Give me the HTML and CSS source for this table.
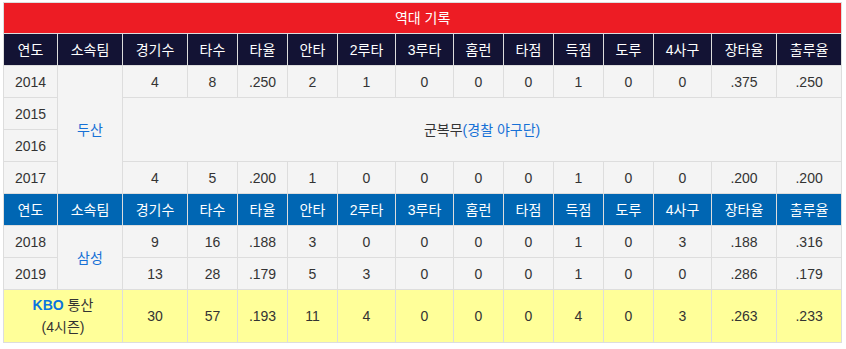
FILE: index.html
```html
<!DOCTYPE html>
<html lang="ko">
<head>
<meta charset="utf-8">
<link rel="stylesheet" href="styles.css">
</head>
<body>
<div class="wrap">
<table class="rec">
<colgroup>
<col class="w54"><col class="w65"><col class="w65"><col class="w50"><col class="w50"><col class="w50"><col class="w58"><col class="w58"><col class="w50"><col class="w50"><col class="w50"><col class="w50"><col class="w58"><col class="w65"><col class="w65">
</colgroup>
<tr class="title"><th colspan="15">역대 기록</th></tr>
<tr class="head dark"><th>연도</th><th>소속팀</th><th>경기수</th><th>타수</th><th>타율</th><th>안타</th><th>2루타</th><th>3루타</th><th>홈런</th><th>타점</th><th>득점</th><th>도루</th><th>4사구</th><th>장타율</th><th>출루율</th></tr>
<tr><td>2014</td><td rowspan="4" class="team">두산</td><td>4</td><td>8</td><td>.250</td><td>2</td><td>1</td><td>0</td><td>0</td><td>0</td><td>1</td><td>0</td><td>0</td><td>.375</td><td>.250</td></tr>
<tr><td>2015</td><td colspan="13" rowspan="2">군복무<span class="link">(경찰 야구단)</span></td></tr>
<tr><td>2016</td></tr>
<tr><td>2017</td><td>4</td><td>5</td><td>.200</td><td>1</td><td>0</td><td>0</td><td>0</td><td>0</td><td>1</td><td>0</td><td>0</td><td>.200</td><td>.200</td></tr>
<tr class="head blue"><th>연도</th><th>소속팀</th><th>경기수</th><th>타수</th><th>타율</th><th>안타</th><th>2루타</th><th>3루타</th><th>홈런</th><th>타점</th><th>득점</th><th>도루</th><th>4사구</th><th>장타율</th><th>출루율</th></tr>
<tr><td>2018</td><td rowspan="2" class="team">삼성</td><td>9</td><td>16</td><td>.188</td><td>3</td><td>0</td><td>0</td><td>0</td><td>0</td><td>1</td><td>0</td><td>3</td><td>.188</td><td>.316</td></tr>
<tr><td>2019</td><td>13</td><td>28</td><td>.179</td><td>5</td><td>3</td><td>0</td><td>0</td><td>0</td><td>1</td><td>0</td><td>0</td><td>.286</td><td>.179</td></tr>
<tr class="total"><td colspan="2"><span class="kbo">KBO</span> 통산<br>(4시즌)</td><td>30</td><td>57</td><td>.193</td><td>11</td><td>4</td><td>0</td><td>0</td><td>0</td><td>4</td><td>0</td><td>3</td><td>.263</td><td>.233</td></tr>
</table>
</div>
</body>
</html>
```
FILE: styles.css
```css
html, body { margin: 0; padding: 0; background: #fff; }
.wrap { padding: 2px 3px; }
.rec {
  border-collapse: collapse;
  table-layout: fixed;
  width: 839px;
  font-family: "Liberation Sans", "Noto Sans CJK KR", sans-serif;
  font-size: 14px;
  color: #333;
}
.w54 { width: 54px; }
.w65 { width: 65px; }
.w50 { width: 50px; }
.w58 { width: 58px; }
.rec th, .rec td {
  border: 1px solid #ddd;
  text-align: center;
  vertical-align: middle;
  padding: 5px 0 4px;
  line-height: 22px;
  font-weight: normal;
  white-space: nowrap;
}
.rec td { background: #f4f4f4; }
.title th { background: #ed1c24; color: #fff; padding: 4px 0 4px; }
.dark th { background: #131334; color: #fff; }
.blue th { background: #0066b3; color: #fff; }
.team, .link { color: #1670d6; }
.total td { background: #ffff99; padding: 4px 0 4px; }
.kbo { color: #0b74de; font-weight: bold; }
```
